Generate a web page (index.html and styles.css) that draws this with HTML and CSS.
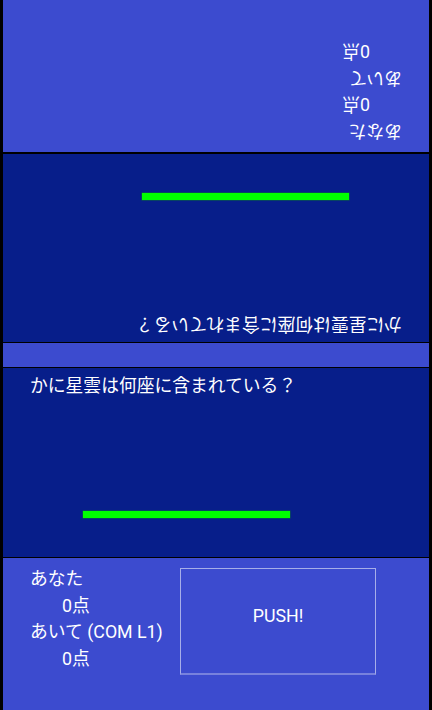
FILE: index.html
```html
<!DOCTYPE html>
<html lang="ja">
<head>
<meta charset="utf-8">
<link rel="stylesheet" href="styles.css">
</head>
<body>
<div class="screen">
  <div class="half half-top">
    <div class="field field-top">
      <div class="question">かに星雲は何座に含まれている？</div>
      <div class="bar"></div>
    </div>
    <div class="score-panel">
      <div class="scores">
        <div class="line">あなた</div>
        <div class="line indent">0点</div>
        <div class="line">あいて</div>
        <div class="line indent">0点</div>
      </div>
    </div>
  </div>
  <div class="divider"></div>
  <div class="half">
    <div class="field field-bottom">
      <div class="question">かに星雲は何座に含まれている？</div>
      <div class="bar"></div>
    </div>
    <div class="score-panel">
      <div class="scores">
        <div class="line">あなた</div>
        <div class="line indent">0点</div>
        <div class="line">あいて (COM L1)</div>
        <div class="line indent">0点</div>
      </div>
      <div class="push">PUSH!</div>
    </div>
  </div>
</div>
</body>
</html>
```
FILE: styles.css
```css
html, body {
  margin: 0;
  padding: 0;
  background: #000;
}
.screen {
  width: 432px;
  height: 710px;
  padding: 0 3px;
  box-sizing: border-box;
  display: flex;
  flex-direction: column;
  background: #000;
  font-family: "Roboto", "Noto Sans CJK JP", sans-serif;
  color: #fff;
  overflow: hidden;
}
.half {
  display: flex;
  flex-direction: column;
  gap: 1px;
}
.half-top {
  height: 342px;
  gap: 2px;
  transform: rotate(180deg);
  flex: none;
}
.divider {
  height: 24px;
  margin: 1px 0;
  background: #3c4bcf;
  flex: none;
}
.field {
  background: #071e8a;
  display: flex;
  flex-direction: column;
  flex: none;
}
.field-top { height: 188px; }
.field-bottom { height: 189px; }
.question {
  font-size: 17.8px;
  line-height: 25px;
  padding: 5px 0 0 27px;
  white-space: nowrap;
}
.bar {
  margin-top: auto;
  margin-bottom: 39px;
  margin-left: 80px;
  width: 207px;
  height: 7px;
  background: #00ff00;
  box-shadow: 0 0 0 0.5px #0a6a3a;
}
.score-panel {
  height: 152px;
  background: #3c4bcf;
  display: flex;
  flex: none;
}
.scores {
  width: 150px;
  padding: 8px 0 0 27px;
  font-size: 17.8px;
  line-height: 26.7px;
  white-space: nowrap;
}
.indent {
  padding-left: 32px;
}
.push {
  margin-top: 10px;
  width: 196px;
  height: 107px;
  box-sizing: border-box;
  border: 1px solid rgba(255, 255, 255, 0.55);
  border-bottom: 2px solid rgba(255, 255, 255, 0.3);
  display: flex;
  align-items: center;
  justify-content: center;
  padding-bottom: 12px;
  font-size: 17.8px;
}
```
